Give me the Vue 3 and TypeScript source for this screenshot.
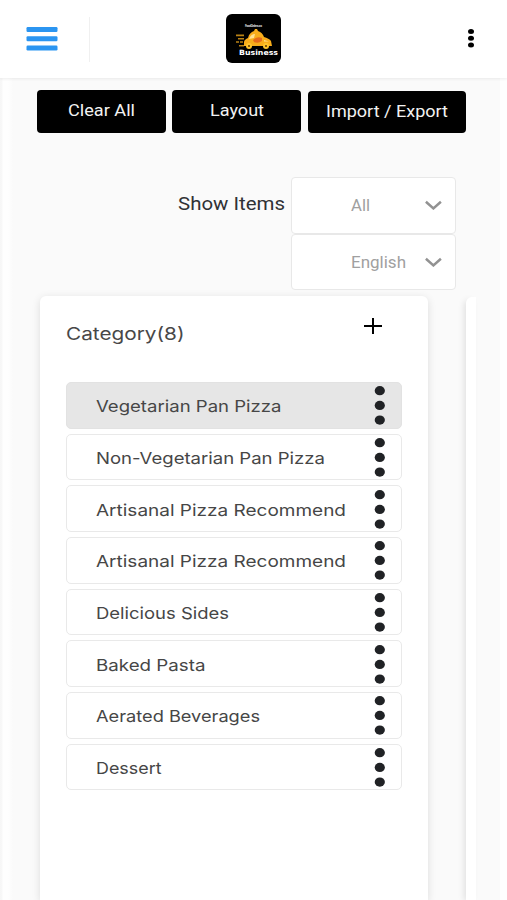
<script setup lang="ts">
interface Category {
  name: string
  width: number
}

const categories: Category[] = [
  { name: 'Vegetarian Pan Pizza', width: 185.5 },
  { name: 'Non-Vegetarian Pan Pizza', width: 229 },
  { name: 'Artisanal Pizza Recommend', width: 250 },
  { name: 'Artisanal Pizza Recommend', width: 250 },
  { name: 'Delicious Sides', width: 133 },
  { name: 'Baked Pasta', width: 109.5 },
  { name: 'Aerated Beverages', width: 164 },
  { name: 'Dessert', width: 65.5 },
]

const actions = [
  { name: 'Clear All', width: 67 },
  { name: 'Layout', width: 54 },
  { name: 'Import / Export', width: 122 },
]

const filters = [
  { value: 'All', width: 19 },
  { value: 'English', width: 55 },
]
</script>

<template>
  <div class="page">
    <header class="header">
      <svg class="burger" width="32" height="24" viewBox="0 0 32 24" fill="#2b95f1">
        <rect x=".5" y="0" width="31" height="5" rx="1.2" />
        <rect x=".5" y="9.3" width="31" height="5" rx="1.2" />
        <rect x=".5" y="18.5" width="31" height="5" rx="1.2" />
      </svg>
      <div class="divider"></div>
      <svg class="logo" width="55" height="49" viewBox="0 0 55 49">
        <rect width="55" height="49" rx="6" />
        <text x="19" y="12.7" font-size="3.2" font-weight="700" fill="#ddd" textLength="17">FoodOrders.co</text>
        <g fill="#f8ad1b">
          <path d="M18 32v-4c0-2 2-3 4-4 1-4 3-6 6-7l1-2h2l1 2c3 1 5 3 6 6 3 1 6 2 7 4l1 5z" />
          <path d="M10 20.5h8v1.7h-8zM12 24h6v1.5h-6zM10 27.3h3v1.5h-3zM14 27.3h3v1.5h-3zM13 31h5v1.4h-5z" opacity=".75" />
        </g>
        <path d="M23 25q2-5 6-5l-1 4zM38 26l5 1.5h-5z" fill="#ffe092" />
        <path d="M27 26q4-4 9-2v3q-4 3-8 1" fill="#e66b1b" />
        <circle cx="23" cy="32" r="3" fill="#ffc42c" />
        <circle cx="40" cy="32" r="3" fill="#ffc42c" />
        <circle cx="23" cy="32" r="1" fill="#5b3400" />
        <circle cx="40" cy="32" r="1" fill="#5b3400" />
        <text x="13" y="40.5" font-size="7.2" font-weight="700" fill="#fff" font-family="DejaVu Sans, sans-serif" textLength="39" lengthAdjust="spacingAndGlyphs">Business</text>
      </svg>
      <svg class="more" width="6" height="20" viewBox="0 0 6 20">
        <ellipse cx="3" cy="2.5" rx="3" ry="2.5" />
        <ellipse cx="3" cy="9.2" rx="3" ry="2.5" />
        <ellipse cx="3" cy="16.1" rx="3" ry="2.5" />
      </svg>
    </header>

    <main class="content">
      <div class="actions">
        <button v-for="action in actions" :key="action.name" class="action">
          <svg :width="action.width" height="24">
            <text x="0" y="17" :textLength="action.width" lengthAdjust="spacingAndGlyphs">{{ action.name }}</text>
          </svg>
        </button>
      </div>

      <div class="filters">
        <svg class="filter-label" width="108" height="28">
          <text x="0" y="20" textLength="107" lengthAdjust="spacingAndGlyphs">Show Items</text>
        </svg>
        <div class="selects">
          <div v-for="filter in filters" :key="filter.value" class="select">
            <svg :width="filter.width" height="24">
              <text x="0" y="18.2" :textLength="filter.width" lengthAdjust="spacingAndGlyphs">{{ filter.value }}</text>
            </svg>
            <svg class="chevron" width="18" height="10" viewBox="0 0 18 10">
              <path d="M1.9 1.8 9.4 8.4l7.5-6.6" fill="none" stroke="#929292" stroke-width="2.5" />
            </svg>
          </div>
        </div>
      </div>

      <div class="board">
        <section class="panel">
          <div class="panel-head">
            <svg class="title" width="120" height="28">
              <text x="0" y="20" textLength="118.5" lengthAdjust="spacingAndGlyphs">Category(8)</text>
            </svg>
            <svg class="plus" width="18" height="16" viewBox="0 0 18 16">
              <path d="M0 8h18M9 0v16" stroke="#000" stroke-width="2" />
            </svg>
          </div>
          <ul class="list">
            <li v-for="(category, index) in categories" :key="index" class="item" :class="{ selected: index === 0 }">
              <svg class="item-name" width="251" height="26">
                <text x="0" y="19.8" :textLength="category.width" lengthAdjust="spacingAndGlyphs">{{ category.name }}</text>
              </svg>
              <svg class="dots" width="11" height="40" viewBox="0 0 11 40" fill="#202225">
                <ellipse cx="5.8" cy="5.7" rx="5.1" ry="4.6" />
                <ellipse cx="5.8" cy="20.4" rx="5.1" ry="4.6" />
                <ellipse cx="5.8" cy="35.1" rx="5.1" ry="4.6" />
              </svg>
            </li>
          </ul>
        </section>
        <section class="next-panel"></section>
      </div>
    </main>
  </div>
</template>

<style>
body {
  background: #fefefe;
}
</style>

<style scoped>
.page {
  display: flex;
  flex-direction: column;
  height: 900px;
  overflow: hidden;
  font-family: Roboto, "Liberation Sans", sans-serif;
}
.page * {
  box-sizing: border-box;
}
svg {
  display: block;
  flex: none;
}
.header {
  display: flex;
  flex: none;
  align-items: center;
  height: 78px;
  padding-left: 26px;
  background: #fff;
  box-shadow: 0 1px 3px rgba(0, 0, 0, 0.07);
  z-index: 1;
}
.divider {
  width: 1px;
  height: 45px;
  margin-left: 31px;
  background: #f0f0f0;
}
.burger {
  margin-top: -1px;
}
.logo {
  margin: -1px 0 0 136px;
}
.more {
  margin-left: 187px;
}
.content {
  display: flex;
  flex: 1;
  flex-direction: column;
  width: 500px;
  min-height: 0;
  padding: 12px 24px 0 37px;
  background: linear-gradient(90deg, #f6f6f6 0, #f8f8f8 2px, #fefefe 3px, #fefefe 8px, #fafafa 13px);
}
.actions {
  display: flex;
  gap: 6px;
  height: 87px;
}
.action {
  display: flex;
  flex: none;
  align-items: center;
  justify-content: center;
  width: 129px;
  height: 42.5px;
  padding: 0;
  border: 0;
  border-radius: 4px;
  background: #000;
}
.action:nth-child(2) {
  margin-left: 0.4px;
}
.action:last-child {
  width: 158.4px;
  height: 42px;
  margin: 1px 0 0 0.4px;
}
.action text {
  fill: #f2f2f2;
  font: 400 17px Roboto, sans-serif;
}
.filters {
  display: flex;
  align-items: flex-start;
  height: 119px;
  padding-left: 141px;
}
.filter-label {
  margin: 13px 5px 0 0;
}
.filter-label text {
  fill: #303235;
  font: 19px Roboto, sans-serif;
}
.select {
  display: flex;
  align-items: center;
  width: 165px;
  height: 56.7px;
  padding: 0 13px 1px 59px;
  border: 1px solid #e8e8e8;
  border-radius: 4px;
  background: #fff;
}
.select text {
  fill: #a0a0a0;
  font: 16px Roboto, sans-serif;
}
.chevron {
  margin-left: auto;
}
.board {
  display: flex;
  flex: 1;
  gap: 38px;
  padding-left: 3px;
}
.panel {
  flex: none;
  width: 388px;
  padding: 0 26px;
  border-radius: 6px 6px 0 0;
  background: #fff;
  box-shadow: 0 2px 9px rgba(0, 0, 0, 0.12);
}
.panel-head {
  display: flex;
  align-items: flex-start;
  justify-content: space-between;
  height: 86px;
  padding: 24px 20px 0 0;
}
.plus {
  margin-top: -2.5px;
}
.title text {
  fill: #484848;
  font: 17.5px Inter, sans-serif;
}
.list {
  display: flex;
  flex-direction: column;
  gap: 5.2px;
  margin: 0;
  padding: 0;
  list-style: none;
}
.item {
  display: flex;
  align-items: center;
  justify-content: space-between;
  width: 335.5px;
  height: 46.5px;
  padding: 0 16px 0 29px;
  border: 1px solid #e9e9e9;
  border-radius: 5px;
  background: #fff;
}
.item.selected {
  border-color: #e2e2e2;
  background: #e6e6e6;
}
.item text {
  fill: #464646;
  font: 16.5px Inter, sans-serif;
}
.next-panel {
  flex: none;
  width: 10px;
  margin-top: 1px;
  border-radius: 6px 0 0 0;
  background: #fff;
  box-shadow: -3px 2px 6px -1px rgba(0, 0, 0, 0.1);
}
</style>
